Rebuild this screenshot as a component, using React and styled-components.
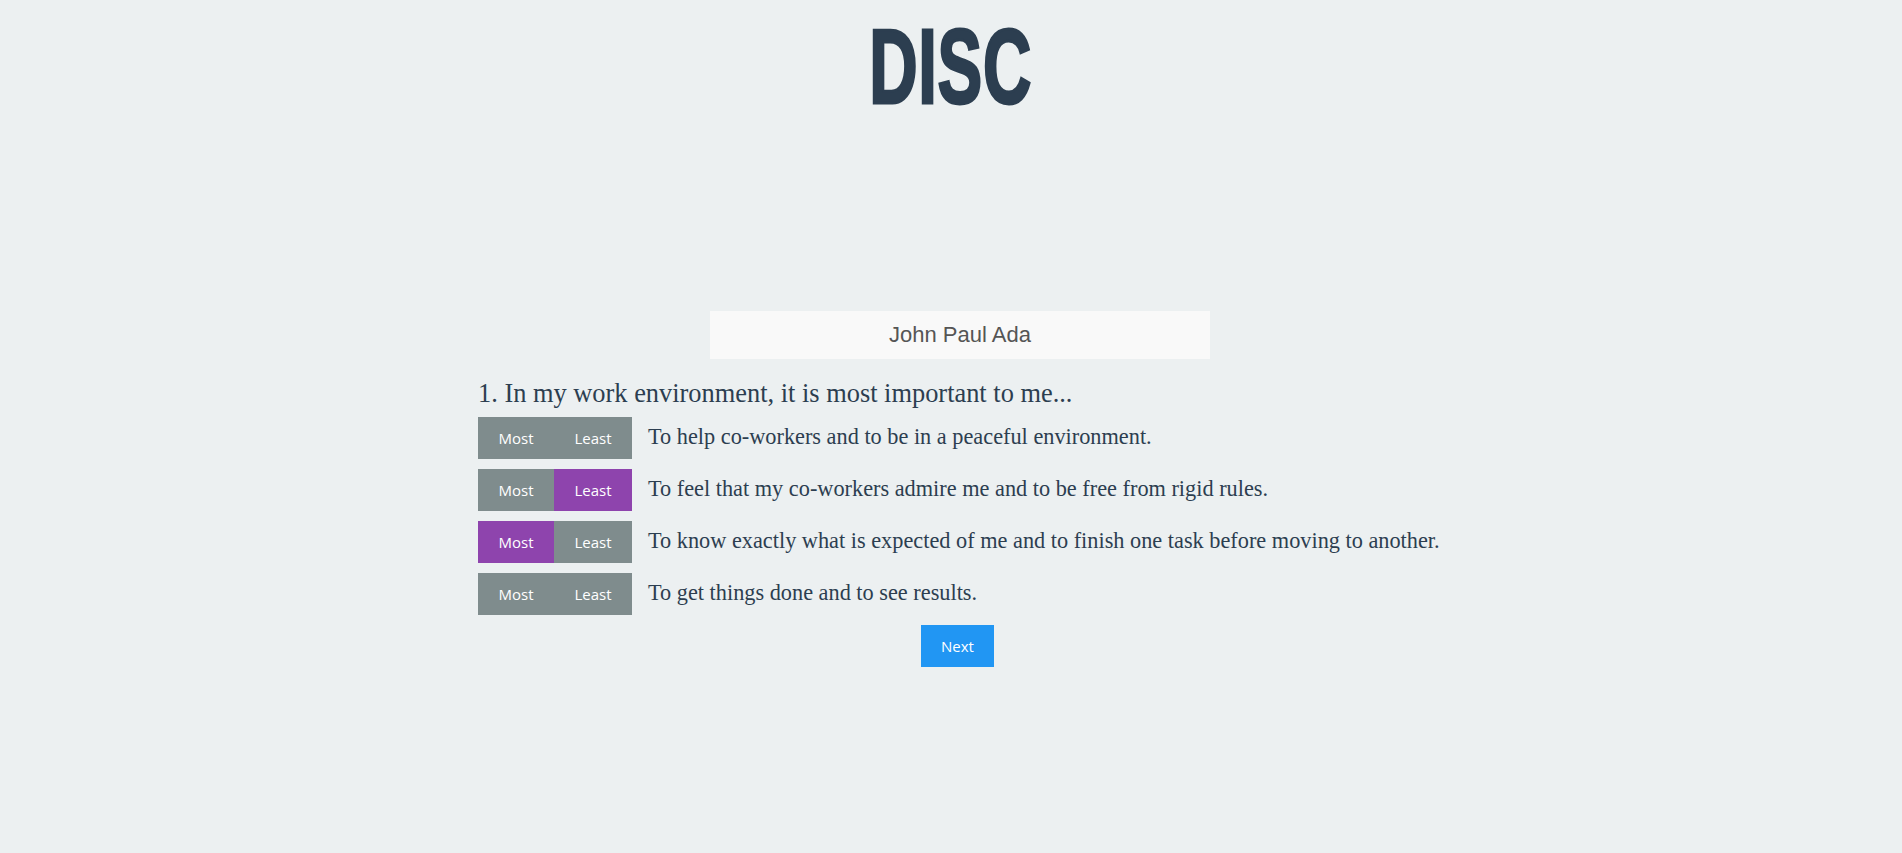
import React, { useState } from "react";
import styled, { createGlobalStyle } from "styled-components";

const GlobalStyle = createGlobalStyle`
  html, body {
    margin: 0;
    padding: 0;
    background: #ecf0f1;
  }
  body {
    font-family: "Liberation Serif", serif;
    color: #2c3e50;
  }
`;

const Page = styled.div`
  min-height: 853px;
  background: #ecf0f1;
  display: flex;
  flex-direction: column;
  align-items: center;
`;

const Title = styled.h1`
  margin: 0;
  padding-top: 13px;
  height: 106px;
  font-family: "Liberation Sans", Arial, sans-serif;
  font-weight: 700;
  font-size: 106px;
  line-height: 1;
  color: #2c3e50;
  text-align: center;
`;

const TitleText = styled.span`
  display: inline-block;
  transform: scaleX(0.632);
  letter-spacing: 1px;
  -webkit-text-stroke: 3px #2c3e50;
`;

const NameRow = styled.div`
  margin-top: 192px;
  width: 946px;
  display: flex;
  justify-content: center;
  padding-left: 18px;
  box-sizing: border-box;
`;

const NameBox = styled.div`
  width: 500px;
  height: 48px;
  background: #f9f9f9;
  display: flex;
  align-items: center;
  justify-content: center;
  font-family: "Liberation Sans", Arial, sans-serif;
  font-size: 22px;
  color: #555555;
`;

const Quiz = styled.div`
  width: 946px;
  display: flex;
  flex-direction: column;
  gap: 10px;
`;

const Question = styled.div`
  margin-top: 19px;
  margin-bottom: -3px;
  font-family: "Liberation Serif", serif;
  font-size: 26.4px;
  line-height: 1.2;
  color: #2c3e50;
  white-space: nowrap;
`;

const Row = styled.div`
  display: flex;
  align-items: center;
  gap: 16px;
`;

const ButtonGroup = styled.div`
  display: flex;
  flex-shrink: 0;
`;

const Choice = styled.button`
  height: 42px;
  padding: 0 20px;
  border: none;
  margin: 0;
  border-radius: 0;
  background: ${(p) => (p.$active ? "#8e44ad" : "#7f8c8d")};
  color: #ffffff;
  font-family: "Open Sans", sans-serif;
  font-size: 15px;
  cursor: pointer;
  width: ${(p) => p.$w}px;
`;

const OptionText = styled.span`
  font-family: "Liberation Serif", serif;
  font-size: 22.3px;
  line-height: 1.2;
  color: #2c3e50;
  white-space: nowrap;
`;

const NextRow = styled.div`
  display: flex;
  justify-content: center;
  padding-left: 13px;
`;

const NextButton = styled.button`
  height: 42px;
  width: 73px;
  border: none;
  border-radius: 0;
  background: #2196f3;
  color: #ffffff;
  font-family: "Open Sans", sans-serif;
  font-size: 15px;
  cursor: pointer;
`;

const options = [
  "To help co-workers and to be in a peaceful environment.",
  "To feel that my co-workers admire me and to be free from rigid rules.",
  "To know exactly what is expected of me and to finish one task before moving to another.",
  "To get things done and to see results.",
];

export default function App() {
  const [most, setMost] = useState(2);
  const [least, setLeast] = useState(1);
  return (
    <>
      <GlobalStyle />
      <Page>
        <Title>
          <TitleText>DISC</TitleText>
        </Title>
        <NameRow>
          <NameBox>John Paul Ada</NameBox>
        </NameRow>
        <Quiz>
          <Question>1. In my work environment, it is most important to me...</Question>
          {options.map((text, i) => (
            <Row key={i}>
              <ButtonGroup>
                <Choice $w={76} $active={most === i} onClick={() => setMost(i)}>
                  Most
                </Choice>
                <Choice $w={78} $active={least === i} onClick={() => setLeast(i)}>
                  Least
                </Choice>
              </ButtonGroup>
              <OptionText>{text}</OptionText>
            </Row>
          ))}
          <NextRow>
            <NextButton>Next</NextButton>
          </NextRow>
        </Quiz>
      </Page>
    </>
  );
}
